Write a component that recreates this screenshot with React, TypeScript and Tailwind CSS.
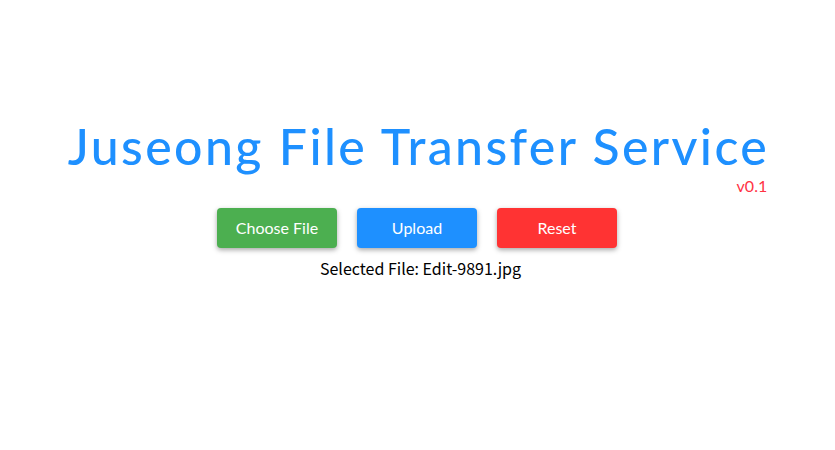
export default function App() {
	return (
		<div className="w-full h-[450px] bg-white flex flex-col items-center pt-[118px] font-['Lato',sans-serif]">
			<div className="flex flex-col">
				<h1 className="text-[50px] leading-[56px] font-medium text-[#1e90ff] tracking-[2.4px] -mr-[2px]">
					Juseong File Transfer Service
				</h1>
				<p className="text-right text-[16px] leading-[20px] text-[#ff3344] mt-[2px]">v0.1</p>
			</div>
			<div className="flex gap-5 mt-[12px] -ml-[1px]">
				<button className="w-[120px] h-[40px] rounded-[4px] bg-[#4caf50] text-white text-[16px] shadow-[0_2px_5px_rgba(0,0,0,0.35)]">
					Choose File
				</button>
				<button className="w-[120px] h-[40px] rounded-[4px] bg-[#1e90ff] text-white text-[16px] shadow-[0_2px_5px_rgba(0,0,0,0.35)]">
					Upload
				</button>
				<button className="w-[120px] h-[40px] rounded-[4px] bg-[#ff3333] text-white text-[16px] shadow-[0_2px_5px_rgba(0,0,0,0.35)]">
					Reset
				</button>
			</div>
			<p className="mt-[9px] ml-[6px] text-[16px] leading-[22px] text-black font-['Noto_Sans_CJK_KR',sans-serif]">
				Selected File: Edit-9891.jpg
			</p>
		</div>
	)
}
